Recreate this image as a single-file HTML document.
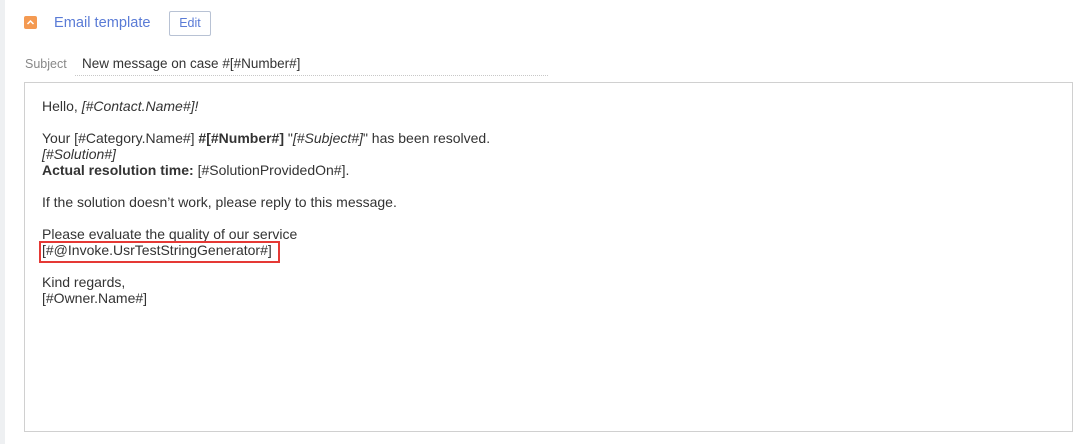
<!DOCTYPE html>
<html><head><style>
body{margin:0;width:1084px;height:444px;background:#fff;position:relative;overflow:hidden;font-family:"Liberation Sans",sans-serif}
.strip{position:absolute;left:0;top:0;width:5px;height:444px;background:#eef0f2}
.ico{position:absolute;left:24px;top:16px;width:13px;height:13px;background:#f49a52;border-radius:2px}
.title{position:absolute;left:54px;top:15px;font-size:14.6px;color:#5a7bd6}
.edit{position:absolute;left:169px;top:11px;border:1px solid #b8c2d4;border-radius:2px;font-size:12.5px;color:#5a7bd6;text-align:center;line-height:23px;box-sizing:border-box;width:42px;height:25px}
.subj{position:absolute;left:25px;top:57px;font-size:12.5px;color:#888}
.sval{position:absolute;left:75px;top:56px;width:473px;font-size:13.5px;color:#333;padding-left:7px;height:20px;border-bottom:1px dotted #c8c8c8;box-sizing:border-box}
.box{position:absolute;left:24px;top:82px;width:1049px;height:350px;border:1px solid #d0d0d0;box-sizing:border-box}
.txt{position:absolute;left:42px;top:98px;font-size:14px;line-height:16px;color:#333}
.red{position:absolute;left:39px;top:241px;width:241px;height:22px;border:2px solid #e53935;box-sizing:border-box}
</style></head><body>
<div class="strip"></div>
<div class="ico"><svg width="13" height="13"><path d="M3.5 8 L6.5 5 L9.5 8" stroke="#fff" stroke-width="1.5" fill="none"/></svg></div>
<div class="title">Email template</div>
<div class="edit">Edit</div>
<div class="subj">Subject</div>
<div class="sval">New message on case #[#Number#]</div>
<div class="box"></div>
<div class="txt">Hello, <i>[#Contact.Name#]!</i><br><br>
Your [#Category.Name#] <b>#[#Number#]</b> "<i>[#Subject#]</i>" has been resolved.<br>
<i>[#Solution#]</i><br>
<b>Actual resolution time:</b> [#SolutionProvidedOn#].<br><br>
If the solution doesn’t work, please reply to this message.<br><br>
Please evaluate the quality of our service<br>
[#@Invoke.UsrTestStringGenerator#]<br><br>
Kind regards,<br>
[#Owner.Name#]</div>
<div class="red"></div>
</body></html>
